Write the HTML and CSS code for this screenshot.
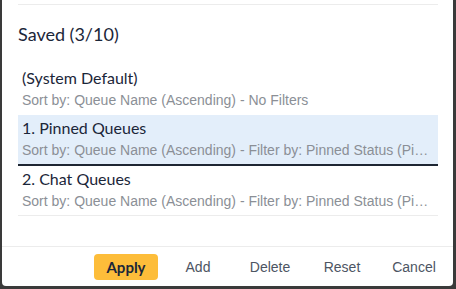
FILE: index.html
```html
<!DOCTYPE html>
<html>

<head>
    <meta charset='utf-8'>
    <title>Saved Views</title>
    <meta name='viewport' content='width=device-width, initial-scale=1'>
    <link rel="stylesheet" href="styles.css">
</head>

<body>
    <div class="dialog">
        <div class="content">
            <div class="top_line"></div>
            <h2>Saved (3/10)</h2>
            <ul class="view_list">
                <li class="view_item">
                    <div class="view_title">(System Default)</div>
                    <div class="view_desc">Sort by: Queue Name (Ascending) - No Filters</div>
                </li>
                <li class="view_item selected">
                    <div class="view_title">1. Pinned Queues</div>
                    <div class="view_desc">Sort by: Queue Name (Ascending) - Filter by: Pinned Status (Pinned)</div>
                </li>
                <li class="view_item last">
                    <div class="view_title">2. Chat Queues</div>
                    <div class="view_desc">Sort by: Queue Name (Ascending) - Filter by: Pinned Status (Pinned), Channel (Chat)</div>
                </li>
            </ul>
        </div>
        <div class="footer">
            <button class="btn btn_apply">Apply</button>
            <button class="btn">Add</button>
            <button class="btn">Delete</button>
            <button class="btn">Reset</button>
            <button class="btn">Cancel</button>
        </div>
    </div>
</body>

</html>
```

FILE: styles.css
```css
* {
    margin: 0;
    padding: 0;
    box-sizing: border-box;
}

body {
    background-color: #3a3a3a;
    height: 289px;
    overflow: hidden;
}

.dialog {
    width: 451px;
    height: 286px;
    margin-left: 2px;
    background-color: white;
    border-radius: 0 0 4px 4px;
    display: flex;
    flex-direction: column;
}

.content {
    flex: 1;
    padding: 4px 15px 0 16px;
}

.top_line {
    border-top: 1px solid #ececec;
}

h2 {
    font-family: Lato, "Noto Sans", sans-serif;
    font-weight: normal;
    font-size: 18px;
    color: #1b2639;
    margin-top: 18px;
    height: 30px;
}

.view_list {
    list-style-type: none;
    margin-top: 12px;
}

.view_item {
    padding: 3px 4px 0 4px;
    height: 50px;
}

.view_item.selected {
    background-color: #e3eefa;
    border-bottom: 2px solid #1e2633;
    height: 51px;
}

.view_item.last {
    border-bottom: 1px solid #ececec;
    height: 50px;
}

.view_title {
    font-family: Lato, "Noto Sans", sans-serif;
    font-size: 16px;
    color: #1b2639;
    height: 24px;
}

.view_desc {
    font-family: "Liberation Sans", Arial, sans-serif;
    font-size: 14px;
    color: #8b8f96;
    white-space: nowrap;
    overflow: hidden;
    text-overflow: ellipsis;
}

.footer {
    border-top: 1px solid #ececec;
    height: 40px;
    display: flex;
    justify-content: flex-end;
    align-items: center;
    gap: 8px;
    padding: 0 7px 0 0;
}

.btn {
    width: 64px;
    height: 26px;
    border: none;
    background: none;
    border-radius: 4px;
    font-family: "Liberation Sans", Arial, sans-serif;
    font-size: 14px;
    color: #4d5563;
}

.btn_apply {
    background-color: #fdbd3a;
    font-family: Lato, "Noto Sans", sans-serif;
    font-weight: bold;
    font-size: 15px;
    color: #1b2639;
}
```
